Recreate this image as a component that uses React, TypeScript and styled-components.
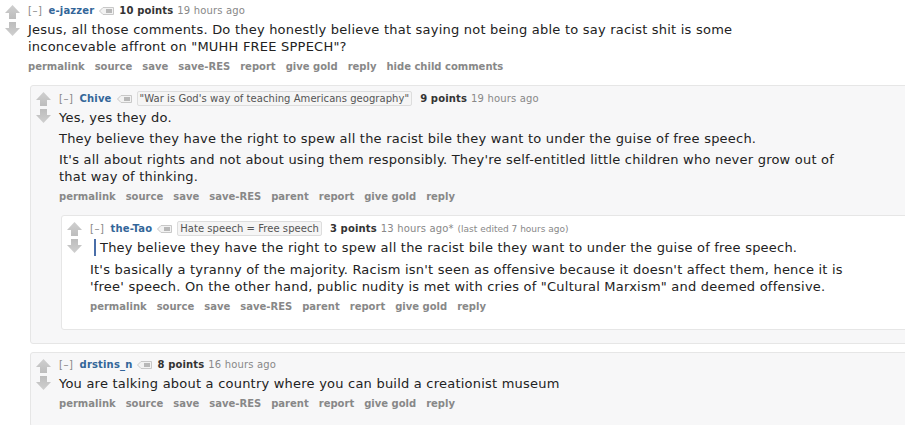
import React from "react";
import styled, { createGlobalStyle, css } from "styled-components";

const Global = createGlobalStyle`
  html, body { margin: 0; padding: 0; background: #fff; overflow: hidden; }
  body { font-family: "DejaVu Sans", Verdana, sans-serif; color: #222; }
`;

const Page = styled.div`
  width: 940px;
  padding: 4px 0 0 5px;
`;

type Box = "odd" | "even" | undefined;

const CommentRow = styled.div<{ $box?: Box }>`
  display: flex;
  gap: 8px;
  ${(p) =>
    p.$box &&
    css`
      background: ${p.$box === "odd" ? "#f7f7f8" : "#fff"};
      border: 1px solid #e6e6e6;
      border-radius: 3px;
      padding: 5px 0 15px 5px;
    `}
`;

const Midcol = styled.div`
  display: flex;
  flex-direction: column;
  gap: 3px;
  width: 15px;
  flex-shrink: 0;
  padding-top: 1px;
`;

const Entry = styled.div`
  flex: 1;
  min-width: 0;
`;

const Tagline = styled.div`
  font-size: 10px;
  line-height: 14px;
  letter-spacing: 0.15px;
  color: #888;
  display: flex;
  align-items: center;
  white-space: nowrap;
`;

const Expand = styled.span`
  color: #888;
  margin-right: 6px;
  letter-spacing: 0.6px;
`;

const Author = styled.span`
  color: #369;
  font-weight: bold;
  margin-right: 5px;
`;

const TagIcon = styled.svg`
  margin-right: 5px;
  flex-shrink: 0;
`;

const Flair = styled.span`
  color: #545454;
  background: #f5f5f5;
  border: 1px solid #ddd;
  border-radius: 2px;
  padding: 0 2px;
  line-height: 13px;
  letter-spacing: 0.05px;
  margin-right: 8px;
`;

const Score = styled.span`
  color: #333;
  font-weight: bold;
  margin-right: 4px;
`;

const Time = styled.span`
  color: #888;
`;

const Edited = styled.span`
  color: #888;
  margin-left: 4px;
  font-size: 9px;
  letter-spacing: 0;
`;

const Md = styled.div`
  margin-top: 3px;
  max-width: 780px;
  font-size: 13px;
  line-height: 17px;
  letter-spacing: 0.22px;
  color: #222;
  p { margin: 0; }
  p + p { margin-top: 4px; }
`;

const Quote = styled.blockquote`
  margin: 0 0 5px 4px;
  padding-left: 4px;
  border-left: 2px solid #4a6ea8;
  p { margin: 0; }
`;

const Buttons = styled.ul`
  list-style: none;
  margin: 5px 0 0;
  padding: 0;
  display: flex;
  gap: 10px;
  font-size: 10px;
  line-height: 14px;
  font-weight: bold;
  color: #888;
  white-space: nowrap;
`;

const Children = styled.div`
  margin: 11px 0 -2px 2px;
  display: flex;
  flex-direction: column;
  gap: 8px;
`;

const Arrow = ({ down }: { down?: boolean }) => (
  <svg width="15" height="14" viewBox="0 0 15 14" style={{ display: "block" }}>
    <defs>
      <linearGradient id={down ? "gd" : "gu"} x1="0" y1="0" x2="0" y2="1">
        <stop offset="0" stopColor={down ? "#bdbdbd" : "#cfcfcf"} />
        <stop offset="1" stopColor={down ? "#cfcfcf" : "#bdbdbd"} />
      </linearGradient>
    </defs>
    <polygon
      points={down ? "4,0 11,0 11,6 15,6 7.5,14 0,6 4,6" : "7.5,0 15,8 11,8 11,14 4,14 4,8 0,8"}
      fill={`url(#${down ? "gd" : "gu"})`}
    />
  </svg>
);

const Tag = () => (
  <TagIcon width="15" height="8" viewBox="0 0 15 8">
    <polygon points="0.5,4 4,0.5 14.5,0.5 14.5,7.5 4,7.5" fill="#f2f2f2" stroke="#c8c8c8" strokeWidth="1" />
    <rect x="7" y="2" width="6" height="4" fill="#b8b8b8" />
  </TagIcon>
);

type CommentProps = {
  box?: Box;
  author: string;
  flair?: string;
  points: string;
  time: string;
  edited?: string;
  buttons: string[];
  children?: React.ReactNode;
  body: React.ReactNode;
};

const Comment = ({ box, author, flair, points, time, edited, buttons, children, body }: CommentProps) => (
  <CommentRow $box={box}>
    <Midcol>
      <Arrow />
      <Arrow down />
    </Midcol>
    <Entry>
      <Tagline>
        <Expand>[–]</Expand>
        <Author>{author}</Author>
        <Tag />
        {flair && <Flair>{flair}</Flair>}
        <Score>{points}</Score>
        <Time>{time}</Time>
        {edited && <Edited>{edited}</Edited>}
      </Tagline>
      <Md>{body}</Md>
      <Buttons>
        {buttons.map((b) => (
          <li key={b}>{b}</li>
        ))}
      </Buttons>
      {children && <Children>{children}</Children>}
    </Entry>
  </CommentRow>
);

const childButtons = ["permalink", "source", "save", "save-RES", "parent", "report", "give gold", "reply"];

export default function App() {
  return (
    <Page>
      <Global />
      <Comment
        author="e-jazzer"
        points="10 points"
        time="19 hours ago"
        buttons={["permalink", "source", "save", "save-RES", "report", "give gold", "reply", "hide child comments"]}
        body={
          <p>
            Jesus, all those comments. Do they honestly believe that saying not being able to say racist shit is some
            inconcevable affront on "MUHH FREE SPPECH"?
          </p>
        }
      >
        <Comment
          box="odd"
          author="Chive"
          flair={'"War is God\'s way of teaching Americans geography"'}
          points="9 points"
          time="19 hours ago"
          buttons={childButtons}
          body={
            <>
              <p>Yes, yes they do.</p>
              <p>They believe they have the right to spew all the racist bile they want to under the guise of free speech.</p>
              <p>
                It's all about rights and not about using them responsibly. They're self-entitled little children who never
                grow out of that way of thinking.
              </p>
            </>
          }
        >
          <Comment
            box="even"
            author="the-Tao"
            flair="Hate speech = Free speech"
            points="3 points"
            time="13 hours ago*"
            edited="(last edited 7 hours ago)"
            buttons={childButtons}
            body={
              <>
                <Quote>
                  <p>They believe they have the right to spew all the racist bile they want to under the guise of free speech.</p>
                </Quote>
                <p>
                  It's basically a tyranny of the majority. Racism isn't seen as offensive because it doesn't affect them,
                  hence it is 'free' speech. On the other hand, public nudity is met with cries of "Cultural Marxism" and
                  deemed offensive.
                </p>
              </>
            }
          />
        </Comment>
        <Comment
          box="odd"
          author="drstins_n"
          points="8 points"
          time="16 hours ago"
          buttons={childButtons}
          body={<p>You are talking about a country where you can build a creationist museum</p>}
        />
      </Comment>
    </Page>
  );
}
